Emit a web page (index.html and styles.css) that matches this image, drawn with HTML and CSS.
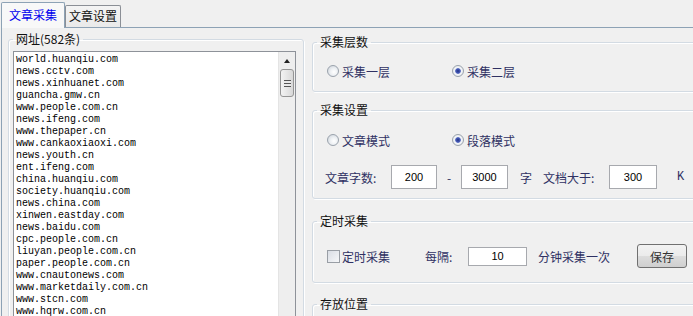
FILE: index.html
```html
<!DOCTYPE html>
<html>
<head>
  <meta charset="UTF-8">
  <title>文章采集</title>
  <link rel="stylesheet" href="styles.css">
</head>
<body>
  <div class="tab-strip">
    <div class="tab tab-active">文章采集</div>
    <div class="tab">文章设置</div>
  </div>

  <div class="tab-page">
    <fieldset class="group url-group">
      <legend>网址(582条)</legend>
      <div class="listbox">
        <ul class="url-list">
          <li>world.huanqiu.com</li>
          <li>news.cctv.com</li>
          <li>news.xinhuanet.com</li>
          <li>guancha.gmw.cn</li>
          <li>www.people.com.cn</li>
          <li>news.ifeng.com</li>
          <li>www.thepaper.cn</li>
          <li>www.cankaoxiaoxi.com</li>
          <li>news.youth.cn</li>
          <li>ent.ifeng.com</li>
          <li>china.huanqiu.com</li>
          <li>society.huanqiu.com</li>
          <li>news.china.com</li>
          <li>xinwen.eastday.com</li>
          <li>news.baidu.com</li>
          <li>cpc.people.com.cn</li>
          <li>liuyan.people.com.cn</li>
          <li>paper.people.com.cn</li>
          <li>www.cnautonews.com</li>
          <li>www.marketdaily.com.cn</li>
          <li>www.stcn.com</li>
          <li>www.hqrw.com.cn</li>
        </ul>
        <div class="vscroll">
          <div class="scroll-up"><span class="arrow-up"></span></div>
          <div class="scroll-thumb"><span class="grip"></span></div>
        </div>
      </div>
    </fieldset>

    <div class="settings">
      <fieldset class="group layer-group">
        <legend>采集层数</legend>
        <div class="option-row">
          <label class="option"><span class="radio"></span>采集一层</label>
          <label class="option"><span class="radio radio-on"></span>采集二层</label>
        </div>
      </fieldset>

      <fieldset class="group mode-group">
        <legend>采集设置</legend>
        <div class="option-row">
          <label class="option"><span class="radio"></span>文章模式</label>
          <label class="option"><span class="radio radio-on"></span>段落模式</label>
        </div>
        <div class="field-row">
          <span class="field-label">文章字数:</span>
          <span class="textbox tb-min">200</span>
          <span class="dash">-</span>
          <span class="textbox tb-max">3000</span>
          <span class="unit-zi">字</span>
          <span class="field-label size-label">文档大于:</span>
          <span class="textbox tb-size">300</span>
          <span class="unit-k">K</span>
        </div>
      </fieldset>

      <fieldset class="group timer-group">
        <legend>定时采集</legend>
        <div class="timer-row">
          <label class="option check-option"><span class="checkbox"></span>定时采集</label>
          <span class="every-label">每隔:</span>
          <span class="textbox tb-interval">10</span>
          <span class="every-text">分钟采集一次</span>
          <button class="btn-save">保存</button>
        </div>
      </fieldset>

      <fieldset class="group store-group">
        <legend>存放位置</legend>
      </fieldset>
    </div>
  </div>
</body>
</html>
```

FILE: styles.css
```css
/* Classic WinForms look */
:root {
  --page-bg: #f0f0f0;
  --tab-border: #8da2b5;
  --group-border: #d3dbe3;
  --list-border: #8e9299;
  --label-color: #2f3163;
  --cjk: "Noto Sans CJK SC", "Noto Sans", sans-serif;
}

html, body {
  margin: 0;
  width: 693px;
  height: 316px;
  overflow: hidden;
}

body {
  background-color: var(--page-bg);
  font-family: var(--cjk);
  font-size: 12px;
  color: #111;
  padding-left: 1px;
  box-sizing: border-box;
}

/* tabs */
.tab-strip {
  height: 27px;
  display: flex;
  align-items: flex-end;
}

.tab {
  box-sizing: border-box;
  width: 56px;
  height: 22px;
  line-height: 20px;
  text-align: center;
  border: 1px solid #8b8f96;
  border-bottom: none;
  border-radius: 2px 2px 0 0;
  background: linear-gradient(#f4f4f4, #e9e9e9);
}

.tab-active {
  position: relative;
  z-index: 1;
  width: 64px;
  height: 26px;
  line-height: 24px;
  margin-bottom: -1px;
  color: #0000ee;
  border-color: var(--tab-border);
  background: #f8f8f8;
}

/* page */
.tab-page {
  display: flex;
  align-items: flex-start;
  border-top: 1px solid var(--tab-border);
  border-left: 1px solid var(--tab-border);
  height: 288px;
  overflow: hidden;
}

.group {
  margin: 0;
  padding: 0;
  min-width: 0;
  box-sizing: border-box;
  border: 1px solid var(--group-border);
  border-radius: 3px;
  box-shadow: 1px 1px 0 #fff, inset 1px 1px 0 #fff;
}

.group legend {
  margin-left: 4px;
  padding: 0 3px;
  line-height: 14px;
  font-size: 12px;
  color: #111;
}

/* url list */
.url-group {
  flex: none;
  width: 296px;
  height: 320px;
  margin: 4px 0 0 6px;
}

.listbox {
  display: flex;
  margin: 5px 7px 0 4px;
  height: 280px;
  border: 1px solid var(--list-border);
  background: #fff;
}

.url-list {
  flex: 1;
  list-style: none;
  margin: 0;
  padding: 2px 0 0 2px;
  font-family: "Liberation Mono", monospace;
  font-size: 10px;
  line-height: 12px;
  color: #000;
}

.vscroll {
  width: 16px;
  border-left: 1px solid #e4e4e4;
  background: #eeeeee;
}

.scroll-up {
  height: 17px;
  display: flex;
  align-items: center;
  justify-content: center;
}

.arrow-up {
  width: 0;
  height: 0;
  border-left: 3px solid transparent;
  border-right: 3px solid transparent;
  border-bottom: 4px solid #222;
  margin-top: 1px;
}

.scroll-thumb {
  box-sizing: border-box;
  height: 28px;
  margin: 0 1px;
  border: 1px solid #959595;
  border-radius: 3px;
  background: linear-gradient(90deg, #f3f3f3, #e6e6e6 50%, #d8d8d8);
  display: flex;
  align-items: center;
  justify-content: center;
}

.grip {
  width: 7px;
  height: 7px;
  background: repeating-linear-gradient(#555 0, #555 1px, #e9e9e9 1px, #e9e9e9 3px);
}

/* right column */
.settings {
  flex: none;
  width: 420px;
  margin-left: 8px;
}

.layer-group {
  height: 57px;
  margin-top: 7px;
}

.mode-group {
  height: 96px;
  margin-top: 11px;
}

.timer-group {
  height: 69px;
  margin-top: 15px;
}

.store-group {
  height: 60px;
  margin-top: 14px;
}

.option-row {
  display: flex;
  align-items: center;
  height: 16px;
  padding-left: 14px;
  color: var(--label-color);
}

.layer-group .option-row {
  padding-top: 14px;
}

.mode-group .option-row {
  padding-top: 15px;
}

.option {
  display: flex;
  align-items: center;
  width: 125px;
}

.radio {
  box-sizing: border-box;
  width: 12px;
  height: 12px;
  margin-right: 3px;
  border: 1px solid #9aa2ac;
  border-radius: 50%;
  background: radial-gradient(circle at 60% 60%, #ffffff 0, #eef1f4 40%, #c9cfd7 100%);
}

.radio-on {
  background: radial-gradient(circle, #1e2f86 0, #4e62bd 2.4px, #f4f6f8 3.2px, #dde2e8 100%);
}

.field-row {
  display: flex;
  align-items: center;
  height: 24px;
  margin-top: 17px;
  padding-left: 12px;
  color: var(--label-color);
}

.field-label {
  width: 66px;
}

.textbox {
  box-sizing: border-box;
  height: 24px;
  border: 1px solid #a7a9ae;
  background: #fff;
  font-family: "Liberation Sans", Arial, sans-serif;
  font-size: 11px;
  color: #000;
  display: flex;
  align-items: center;
  justify-content: center;
}

.tb-min { width: 46px; }
.tb-max { width: 47px; }
.tb-size { width: 48px; }

.dash {
  width: 24px;
  text-align: center;
}

.unit-zi {
  margin-left: 12px;
  width: 12px;
}

.size-label {
  margin-left: 11px;
}

.unit-k {
  margin-left: 20px;
  font-family: "Liberation Mono", monospace;
}

.timer-row {
  display: flex;
  align-items: center;
  height: 24px;
  padding: 16px 0 0 14px;
  color: var(--label-color);
}

.check-option {
  width: auto;
}

.checkbox {
  box-sizing: border-box;
  width: 13px;
  height: 13px;
  margin-right: 2px;
  border: 1px solid #999ea5;
  background: linear-gradient(135deg, #d9dde4, #f6f7f9);
}

.every-label {
  margin-left: 35px;
  width: 43px;
}

.tb-interval {
  width: 59px;
  height: 19px;
}

.every-text {
  margin-left: 11px;
  width: 72px;
}

.btn-save {
  margin-left: 27px;
  width: 50px;
  height: 24px;
  padding: 0;
  border: 1px solid #707070;
  border-radius: 3px;
  background: linear-gradient(#f2f2f2, #ebebeb 50%, #dddddd 51%, #cfcfcf);
  font-family: var(--cjk);
  font-size: 12px;
  color: #333;
}
```
